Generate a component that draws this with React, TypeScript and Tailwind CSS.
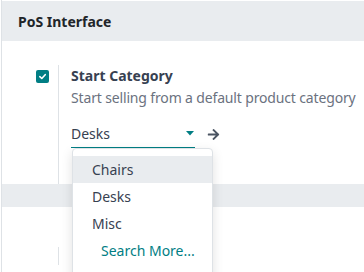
import { FaArrowRight } from 'react-icons/fa'

export default function App() {
  return (
    <div
      className="relative w-[364px] h-[272px] overflow-hidden bg-white"
      style={{ fontFamily: '"Noto Sans", "Open Sans", sans-serif' }}
    >
      <div className="ml-px h-full border-l border-[#dee2e6] flex flex-col">
        {/* section header */}
        <div className="mt-px h-[40px] shrink-0 bg-[#e9ecef] flex items-center pl-[16px]">
          <span className="text-[14px] font-bold text-[#212529]">PoS Interface</span>
        </div>

        {/* setting row */}
        <div className="flex pt-[24px] h-[143px] shrink-0">
          <div className="w-[56px] shrink-0 flex justify-end pr-[9px] pt-[5px]">
            <span className="w-[13px] h-[13px] rounded-[2px] bg-[#017e84] flex items-center justify-center">
              <svg width="9" height="9" viewBox="0 0 10 10">
                <path d="M2 5.2 L4.2 7.2 L8 3" stroke="white" strokeWidth="1.8" fill="none" strokeLinecap="round" strokeLinejoin="round" />
              </svg>
            </span>
          </div>
          <div className="border-l border-[#dee2e6] pl-[12px] flex flex-col">
            <span className="text-[14px] font-bold text-[#374151] leading-[22px]">Start Category</span>
            <span className="text-[14px] text-[#6b7280] leading-[22px] whitespace-nowrap tracking-[-0.15px]">
              Start selling from a default product category
            </span>
            <div className="mt-[15px] flex items-center">
              <div className="w-[124px] h-[24px] pb-[5px] border-b border-[#017e84] flex items-center justify-between pr-[1px]">
                <span className="text-[14px] text-[#374151]">Desks</span>
                <svg width="8" height="5" viewBox="0 0 8 5">
                  <path d="M0 0 L8 0 L4 4.5 Z" fill="#017e84" />
                </svg>
              </div>
              <FaArrowRight className="ml-[12px] mb-[3px] text-[#4b5563]" size={13} />
            </div>
          </div>
        </div>

        {/* next section header */}
        <div className="h-[23px] shrink-0 bg-[#e9ecef]" />

        {/* next setting row */}
        <div className="flex pt-[40px]">
          <div className="w-[56px] shrink-0" />
          <div className="border-l border-[#dee2e6] h-[18px]" />
        </div>
      </div>

      {/* dropdown */}
      <div className="absolute left-[72px] top-[148px] w-[141px] h-[140px] bg-white rounded-[4px] border border-[#dee2e6] shadow-[0_4px_12px_rgba(0,0,0,0.12)] py-[7px]">
        <div className="h-[27px] bg-[#e9ecef] flex items-center pl-[19px] text-[14px] text-[#374151]">Chairs</div>
        <div className="h-[27px] flex items-center pl-[19px] text-[14px] text-[#374151]">Desks</div>
        <div className="h-[27px] flex items-center pl-[19px] text-[14px] text-[#374151]">Misc</div>
        <div className="h-[27px] flex items-center pl-[28px] text-[14px] text-[#017e84]">Search More...</div>
      </div>
    </div>
  )
}
